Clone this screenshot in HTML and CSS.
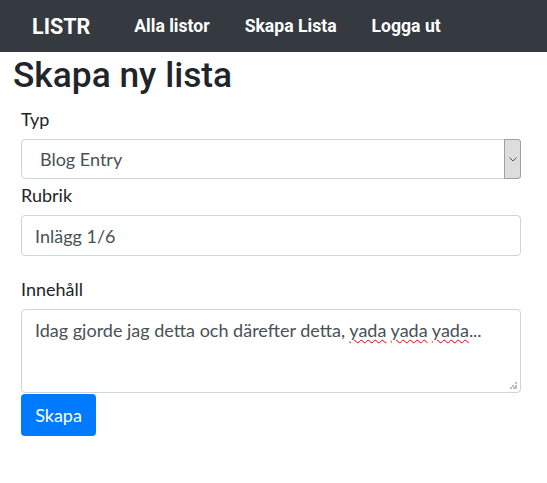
FILE: index.html
```html
<!DOCTYPE html>
<html lang="sv">
<head>
<meta charset="utf-8">
<title>LISTR</title>
<link rel="stylesheet" href="styles.css">
</head>
<body>
<nav class="navbar">
  <span class="brand">LISTR</span>
  <a class="nav-link" href="#">Alla listor</a>
  <a class="nav-link" href="#">Skapa Lista</a>
  <a class="nav-link" href="#">Logga ut</a>
</nav>
<main class="page">
  <h1 class="title">Skapa ny lista</h1>
  <form class="form">
    <label class="label label-typ">Typ</label>
    <div class="select">
      <span class="select-value">Blog Entry</span>
      <span class="select-btn">
        <svg width="8" height="5" viewBox="0 0 8 5"><path d="M0.5 0.5 L4 4 L7.5 0.5" fill="none" stroke="#555" stroke-width="1"/></svg>
      </span>
    </div>
    <label class="label label-rubrik">Rubrik</label>
    <div class="input">Inlägg 1/6</div>
    <label class="label label-inne">Innehåll</label>
    <div class="textarea">
      <span>Idag gjorde jag detta och därefter detta, <span class="spell">yada</span> <span class="spell">yada</span> <span class="spell">yada</span>...</span>
      <span class="grip"></span>
    </div>
    <button class="btn" type="button">Skapa</button>
  </form>
</main>
</body>
</html>
```

FILE: styles.css
```css
html, body {
  margin: 0;
  padding: 0;
  background: #fff;
}
body {
  font-family: "Lato", "Open Sans", sans-serif;
  color: #212529;
}
.navbar {
  height: 52px;
  background: #343a40;
  display: flex;
  align-items: center;
  padding-left: 32px;
  box-sizing: border-box;
  font-family: Roboto, sans-serif;
}
.brand {
  color: #fff;
  font-size: 21.5px;
  font-weight: 700;
  margin-right: 44px;
}
.nav-link {
  color: #fff;
  text-decoration: none;
  font-size: 17.6px;
  font-weight: 700;
  margin-right: 35px;
}
.page {
  padding: 0 26px 0 21px;
}
.title {
  font-family: Roboto, sans-serif;
  font-weight: 500;
  font-size: 35.3px;
  line-height: 40px;
  margin: 3px 0 0 -8px;
  color: #212529;
}
.form {
  display: flex;
  flex-direction: column;
  align-items: stretch;
}
.label {
  font-size: 18px;
  line-height: 24px;
  margin-bottom: 8px;
}
.label-typ {
  margin-top: 12px;
}
.label-rubrik {
  margin-top: 4px;
}
.label-inne {
  margin-top: 21px;
}
.select {
  height: 40px;
  border: 1px solid #ced4da;
  border-radius: 4px;
  box-sizing: border-box;
  display: flex;
  align-items: center;
  justify-content: space-between;
  color: #495057;
  font-size: 18px;
  padding-left: 18px;
}
.select-btn {
  width: 17px;
  height: 40px;
  box-sizing: border-box;
  background: #dddddd;
  border: 1px solid #a0a0a0;
  border-radius: 0 3px 3px 0;
  margin-right: -1px;
  display: flex;
  align-items: center;
  justify-content: center;
}
.input {
  height: 41px;
  border: 1px solid #ced4da;
  border-radius: 4px;
  box-sizing: border-box;
  display: flex;
  align-items: center;
  padding-left: 13px;
  color: #495057;
  font-size: 18px;
}
.textarea {
  position: relative;
  height: 84px;
  border: 1px solid #ced4da;
  border-radius: 4px;
  box-sizing: border-box;
  padding: 8px 13px;
  color: #495057;
  font-size: 18px;
  line-height: 24px;
}
.spell {
  text-decoration: underline wavy #e00000;
  text-decoration-thickness: 1px;
  text-underline-offset: 2px;
}
.grip {
  position: absolute;
  right: 3px;
  bottom: 3px;
  width: 7px;
  height: 7px;
  background:
    linear-gradient(#bbb, #bbb) 5px 0 / 2px 2px no-repeat,
    linear-gradient(#bbb, #bbb) 2px 3px / 2px 2px no-repeat,
    linear-gradient(#bbb, #bbb) 5px 3px / 2px 2px no-repeat,
    linear-gradient(#bbb, #bbb) 0 5px / 2px 2px no-repeat,
    linear-gradient(#bbb, #bbb) 3px 5px / 2px 2px no-repeat,
    linear-gradient(#bbb, #bbb) 5px 5px / 2px 2px no-repeat;
}
.btn {
  align-self: flex-start;
  margin-top: 1px;
  width: 75px;
  height: 42px;
  background: #007bff;
  color: #fff;
  border: 0;
  border-radius: 4px;
  font-family: "Lato", "Open Sans", sans-serif;
  font-size: 18px;
  padding: 0;
}
```
